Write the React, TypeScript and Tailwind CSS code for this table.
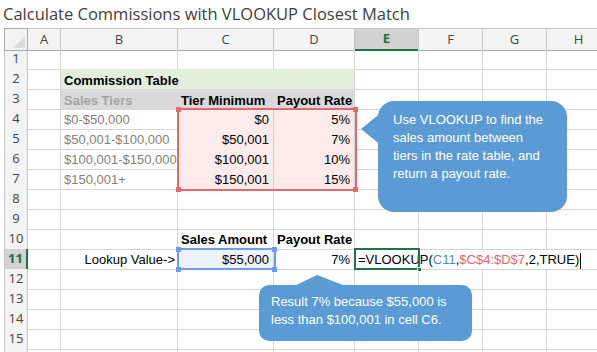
import React from "react";

const cols = "grid grid-cols-[24px_33px_117px_96px_81px_64px_64px_64px_64px]";
const cellFont = { fontFamily: '"Liberation Sans", Arial, sans-serif' };
const headFont = { fontFamily: '"Open Sans", "Noto Sans", sans-serif' };

const grid = "border-r border-b border-[#d4d4d4]";
const txt = "px-[3px] flex items-end pb-[1px] whitespace-nowrap text-[13px] leading-[16px]";

const RowHead = ({ n, active }: { n?: number; active?: boolean }) => (
  <div
    style={headFont}
    className={
      active
        ? "border-l border-b border-[#c6c6c6] border-r-2 border-r-[#217346] bg-[#d2d2d2] text-[#217346] font-bold flex items-center justify-center text-[13px]"
        : "border-l border-r border-b border-[#c6c6c6] bg-[#f3f3f3] text-[#444] flex items-center justify-center text-[13px]"
    }
  >
    {n}
  </div>
);

const Blank = ({ className = "" }: { className?: string }) => <div className={`${grid} ${className}`} />;

const EmptyRow = ({ n }: { n?: number }) => (
  <div className={`${cols} h-[20px]`}>
    <RowHead n={n} />
    {Array.from({ length: 8 }).map((_, i) => (
      <Blank key={i} />
    ))}
  </div>
);

const tiers = [
  ["$0-$50,000", "$0", "5%"],
  ["$50,001-$100,000", "$50,001", "7%"],
  ["$100,001-$150,000", "$100,001", "10%"],
  ["$150,001+", "$150,001", "15%"],
];

const Handle = ({ x, y, color }: { x: number; y: number; color: string }) => (
  <div className={`absolute w-[5px] h-[5px] ${color}`} style={{ left: x, top: y }} />
);

export default function App() {
  return (
    <div className="relative w-[597px] h-[352px] overflow-hidden bg-white" style={cellFont}>
      <div style={headFont} className="h-[28px] pl-[3px] text-[16.5px] leading-[28px] text-[#404040]">
        Calculate Commissions with VLOOKUP Closest Match
      </div>

      <div className="ml-[4px]">
        {/* column headers */}
        <div className={`${cols} h-[21px] text-[13px]`} style={headFont}>
          <div className="relative border-l border-r border-t border-b border-[#ababab] bg-[#f3f3f3]">
            <svg className="absolute right-[2px] bottom-[2px]" width="12" height="12" viewBox="0 0 12 12">
              <polygon points="12,0 12,12 0,12" fill="#dcdcdc" />
            </svg>
          </div>
          {["A", "B", "C", "D", "E", "F", "G", "H"].map((c) =>
            c === "E" ? (
              <div
                key={c}
                className="border-t border-r border-[#c6c6c6] border-b-2 border-b-[#217346] bg-[#d2d2d2] text-[#217346] font-bold flex items-center justify-center"
              >
                {c}
              </div>
            ) : (
              <div
                key={c}
                className="border-t border-r border-b border-[#c6c6c6] border-b-[#ababab] bg-[#f3f3f3] text-[#444] flex items-center justify-center"
              >
                {c}
              </div>
            )
          )}
        </div>

        <EmptyRow n={1} />

        {/* row 2 */}
        <div className={`${cols} h-[20px]`}>
          <RowHead n={2} />
          <Blank />
          <div className={`col-span-3 bg-[#e2efda] border-r border-[#d4d4d4] ${txt} font-bold text-black`}>
            Commission Table
          </div>
          <Blank />
          <Blank />
          <Blank />
          <Blank />
        </div>

        {/* row 3 */}
        <div className={`${cols} h-[20px]`}>
          <RowHead n={3} />
          <Blank />
          <div className={`bg-[#d9d9d9] ${txt} font-bold text-[#a3a3a3]`}>Sales Tiers</div>
          <div className={`bg-[#d9d9d9] ${txt} font-bold text-black`}>Tier Minimum</div>
          <div className={`bg-[#d9d9d9] border-r border-[#d4d4d4] ${txt} font-bold text-black`}>Payout Rate</div>
          <Blank />
          <Blank />
          <Blank />
          <Blank />
        </div>

        {tiers.map(([range, min, rate], i) => (
          <div key={range} className={`${cols} h-[20px]`}>
            <RowHead n={4 + i} />
            <Blank />
            <div className={`${grid} ${txt} text-[#857f78]`}>{range}</div>
            <div className={`border-r border-b border-[#dccaca] bg-[#fdeaea] ${txt} justify-end pr-[4px] text-black`}>{min}</div>
            <div className={`${grid} bg-[#fdeaea] ${txt} justify-end pr-[4px] text-black`}>{rate}</div>
            <Blank />
            <Blank />
            <Blank />
            <Blank />
          </div>
        ))}

        <EmptyRow n={8} />
        <EmptyRow n={9} />

        {/* row 10 */}
        <div className={`${cols} h-[20px]`}>
          <RowHead n={10} />
          <Blank />
          <Blank />
          <div className={`${grid} ${txt} font-bold text-black`}>Sales Amount</div>
          <div className={`${grid} ${txt} font-bold text-black`}>Payout Rate</div>
          <Blank />
          <Blank />
          <Blank />
          <Blank />
        </div>

        {/* row 11 */}
        <div className={`${cols} h-[20px]`}>
          <RowHead n={11} active />
          <Blank />
          <div className={`${grid} ${txt} justify-end pr-[2px] text-black`}>Lookup Value-&gt;</div>
          <div className={`${grid} bg-[#edf2fc] ${txt} justify-end pr-[4px] text-black`}>$55,000</div>
          <div className={`${grid} ${txt} justify-end pr-[4px] text-black`}>7%</div>
          <div className={`col-span-4 border-b border-[#d4d4d4] ${txt} text-black`}>
            <span>=VLOOKUP(</span>
            <span className="text-[#4f86d9]">C11</span>
            <span>,</span>
            <span className="text-[#e8676b]">$C$4:$D$7</span>
            <span>,2,TRUE)</span>
            <span className="inline-block w-[1px] h-[16px] bg-black ml-[1px] mb-[-1px]" />
          </div>
        </div>

        {[12, 13, 14, 15].map((n) => (
          <EmptyRow key={n} n={n} />
        ))}
        <EmptyRow />
      </div>

      {/* C4:D7 reference highlight */}
      <div className="absolute left-[177px] top-[108px] w-[180px] h-[83px] border-2 border-[#e5696c]" />
      <Handle x={176} y={107} color="bg-[#e5696c]" />
      <Handle x={353} y={107} color="bg-[#e5696c]" />
      <Handle x={176} y={187} color="bg-[#e5696c]" />
      <Handle x={353} y={187} color="bg-[#e5696c]" />

      {/* C11 reference highlight */}
      <div className="absolute left-[177px] top-[248px] w-[99px] h-[22px] border-2 border-[#6f9be8]" />
      <Handle x={176} y={247} color="bg-[#6f9be8]" />
      <Handle x={272} y={247} color="bg-[#6f9be8]" />
      <Handle x={176} y={267} color="bg-[#6f9be8]" />
      <Handle x={272} y={267} color="bg-[#6f9be8]" />

      {/* active cell E11 */}
      <div className="absolute left-[354px] top-[248px] w-[66px] h-[22px] border-2 border-[#217346]" />
      <div className="absolute left-[417px] top-[267px] w-[5px] h-[5px] bg-[#217346] border border-white" />

      {/* callout 1 */}
      <svg className="absolute left-[360px] top-[110px]" width="22" height="38" viewBox="0 0 22 38">
        <polygon points="1,19 22,2 22,36" fill="#5b9bd5" />
      </svg>
      <div className="absolute left-[378px] top-[101px] w-[189px] h-[111px] rounded-[16px] bg-[#5b9bd5] pl-[15px] pt-[10px] text-white text-[13px] leading-[18px]">
        Use VLOOKUP to find the
        <br />
        sales amount between
        <br />
        tiers in the rate table, and
        <br />
        return a payout rate.
      </div>

      {/* callout 2 */}
      <svg className="absolute left-[292px] top-[274px]" width="56" height="13" viewBox="0 0 56 13">
        <polygon points="0,13 25,1 56,13" fill="#5b9bd5" />
      </svg>
      <div className="absolute left-[259px] top-[285px] w-[213px] h-[56px] rounded-[10px] bg-[#5b9bd5] pl-[12px] pt-[8px] text-white text-[13px] leading-[18px]">
        Result 7% because $55,000 is
        <br />
        less than $100,001 in cell C6.
      </div>
    </div>
  );
}
